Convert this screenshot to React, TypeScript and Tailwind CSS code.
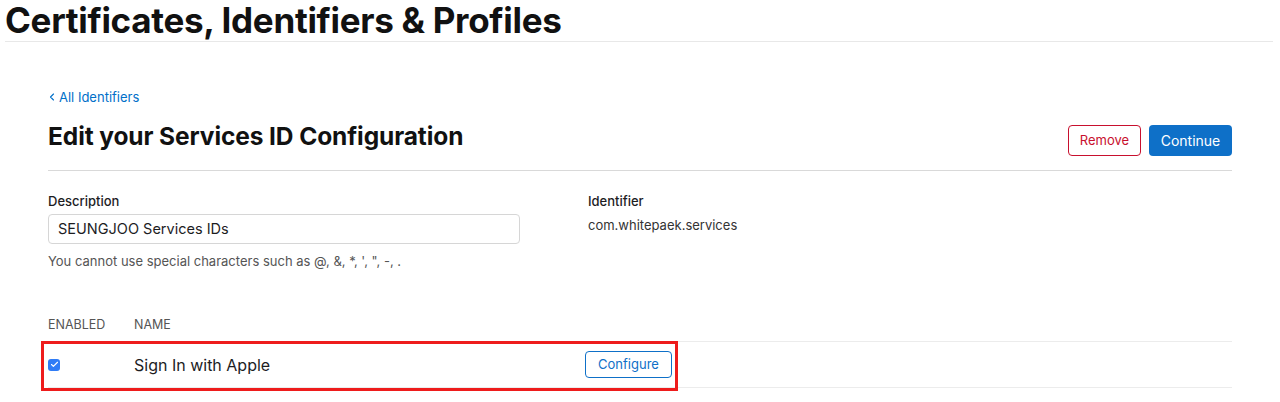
import { ChevronLeft, Check } from "lucide-react"

export default function App() {
    return (
        <div className="min-h-[402px] bg-white text-[#1d1d1f] font-['Inter','Liberation_Sans',sans-serif]">
            <div className="px-[5px] pr-[7px]">
                <h1 className="text-[35px] font-bold leading-[41px] tracking-[-0.3px] text-[#111] border-b border-[#e8e8e8] h-[42px]">
                    Certificates, Identifiers &amp; Profiles
                </h1>
            </div>

            <div className="mx-[48px] w-[1184px]">
                <a className="mt-[47px] flex items-center gap-[1px] text-[13px] leading-[16px] text-[#0070c9]">
                    <ChevronLeft className="h-3 w-3 -ml-[2px]" strokeWidth={2.2} />
                    All Identifiers
                </a>

                <div className="mt-[9px] flex items-center justify-between border-b border-[#d9d9d9] pb-[12px]">
                    <h2 className="text-[24.5px] font-bold leading-[44px] tracking-[-0.1px] text-[#111]">
                        Edit your Services ID Configuration
                    </h2>
                    <div className="flex gap-[8px] mt-[9px]">
                        <button className="h-[31px] w-[73px] rounded-[4px] border border-[#c8102e] text-[13px] text-[#c8102e] bg-white">
                            Remove
                        </button>
                        <button className="h-[31px] w-[83px] rounded-[4px] bg-[#0e70c8] text-[14px] text-white">
                            Continue
                        </button>
                    </div>
                </div>

                <div className="mt-[21px] flex">
                    <div className="w-[540px]">
                        <div className="text-[13px] font-medium leading-[18px]">Description</div>
                        <div className="mt-[4px] w-[472px] h-[30px] rounded-[4px] border border-[#d6d6d6] px-[9px] flex items-center text-[14.5px] text-[#1d1d1f]">
                            SEUNGJOO Services IDs
                        </div>
                        <div className="mt-[8px] text-[13px] leading-[18px] text-[#555]">
                            You cannot use special characters such as @, &amp;, *, ', ", -, .
                        </div>
                    </div>
                    <div>
                        <div className="text-[13px] font-medium leading-[18px]">Identifier</div>
                        <div className="mt-[6px] text-[13px] leading-[18px] text-[#333]">com.whitepaek.services</div>
                    </div>
                </div>

                <div className="mt-[46px] flex text-[12.5px] leading-[18px] text-[#555] pb-[7px]">
                    <div className="w-[86px]">ENABLED</div>
                    <div>NAME</div>
                </div>

                <div className="relative flex items-center h-[47px] border-y border-[#ececec]">
                    <div className="w-[86px] flex items-center">
                        <span className="flex h-[12px] w-[12px] items-center justify-center rounded-[3px] bg-[#2f7cf6]">
                            <Check className="h-[9px] w-[9px] text-white" strokeWidth={3} />
                        </span>
                    </div>
                    <div className="w-[451px] text-[16px] text-[#1d1d1f]">Sign In with Apple</div>
                    <button className="h-[27px] w-[87px] rounded-[4px] border border-[#0e70c8] text-[13px] text-[#0e70c8] bg-white">
                        Configure
                    </button>
                    <div className="absolute left-[-7px] top-[-1px] h-[50px] w-[637px] border-[3px] border-[#ee1c1c] pointer-events-none" />
                </div>
            </div>
        </div>
    )
}
